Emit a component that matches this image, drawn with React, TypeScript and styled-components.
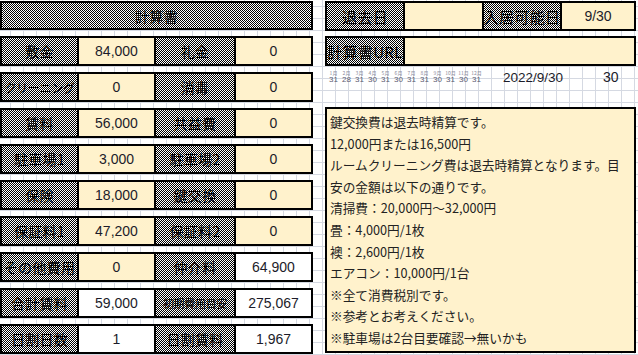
import React from 'react';
import styled, { createGlobalStyle } from 'styled-components';

const GlobalStyle = createGlobalStyle`
  html, body {
    margin: 0;
    padding: 0;
    width: 638px;
    height: 355px;
    overflow: hidden;
    background-color: #fff;
    background-image:
      linear-gradient(to right, #d5d9e2 1px, transparent 1px),
      linear-gradient(to bottom, #d5d9e2 1px, transparent 1px);
    background-size: 13px 100%, 100% 12px;
    background-position: 10px 0, 0 6px;
    font-family: "Noto Sans CJK JP", "Liberation Sans", sans-serif;
    color: #1c1c1c;
  }
`;

type Pair = { label: string; value: string; size?: number; white?: boolean };

const leftRows: Pair[][] = [
  [{ label: '敷金', value: '84,000' }, { label: '礼金', value: '0' }],
  [{ label: 'クリーニング', value: '0', size: 12 }, { label: '消毒', value: '0' }],
  [{ label: '賃料', value: '56,000' }, { label: '共益費', value: '0' }],
  [{ label: '駐車場1', value: '3,000' }, { label: '駐車場2', value: '0' }],
  [{ label: '保険', value: '18,000' }, { label: '鍵交換', value: '0' }],
  [{ label: '保証料1', value: '47,200' }, { label: '保証料2', value: '0' }],
  [{ label: 'その他費用', value: '0' }, { label: '仲介料', value: '64,900', white: true }],
  [{ label: '合計賃料', value: '59,000', white: true }, { label: '初期費用目安', value: '275,067', size: 11, white: true }],
  [{ label: '日割日数', value: '1', white: true }, { label: '日割賃料', value: '1,967', white: true }],
];

const months = [31, 28, 31, 30, 31, 30, 31, 31, 30, 31, 30, 31];

const notes = [
  '鍵交換費は退去時精算です。',
  '12,000円または16,500円',
  'ルームクリーニング費は退去時精算となります。目',
  '安の金額は以下の通りです。',
  '清掃費：20,000円～32,000円',
  '畳：4,000円/1枚',
  '襖：2,600円/1枚',
  'エアコン：10,000円/1台',
  '※全て消費税別です。',
  '※参考とお考えください。',
  '※駐車場は2台目要確認→無いかも',
];

export default function App() {
  return (
    <>
      <GlobalStyle />
      <Sheet>
        <LeftTable>
          <TitleRow>
            <Label>計算書</Label>
          </TitleRow>
          {leftRows.map((row, i) => (
            <Row key={i}>
              {row.map((c) => (
                <React.Fragment key={c.label}>
                  <Label $size={c.size}>{c.label}</Label>
                  <Value $white={c.white}>{c.value}</Value>
                </React.Fragment>
              ))}
            </Row>
          ))}
        </LeftTable>

        <RightPanel>
          <TopRow>
            <Label $size={15}>退去日</Label>
            <Value />
            <Label $size={15}>入居可能日</Label>
            <Value>9/30</Value>
          </TopRow>
          <UrlRow>
            <Label $size={15}>計算書URL</Label>
            <Value />
          </UrlRow>
          <DateStrip>
            <MonthList>
              {months.map((d, i) => (
                <Month key={i}>
                  <MonthName>{i + 1}月</MonthName>
                  <MonthDays>{d}</MonthDays>
                </Month>
              ))}
            </MonthList>
            <DateText>2022/9/30</DateText>
            <DayText>30</DayText>
          </DateStrip>
          <Notes>
            {notes.map((n) => (
              <NoteLine key={n}>{n}</NoteLine>
            ))}
          </Notes>
        </RightPanel>
      </Sheet>
    </>
  );
}

const Sheet = styled.div`
  display: flex;
  gap: 12px;
  padding-top: 1px;
  width: 638px;
  height: 355px;
  box-sizing: border-box;
`;

const LeftTable = styled.div`
  display: flex;
  flex-direction: column;
  gap: 6px;
  width: 313px;
`;

const Row = styled.div`
  display: grid;
  grid-template-columns: 75px 75px 78px 75px;
  gap: 2px;
  height: 30px;
  box-sizing: border-box;
  border: 2px solid #000;
  background: #000;
`;

const TitleRow = styled(Row)`
  grid-template-columns: 1fr;
  height: 29px;
`;

const Label = styled.div<{ $size?: number }>`
  display: flex;
  align-items: center;
  justify-content: center;
  white-space: nowrap;
  overflow: visible;
  background: repeating-conic-gradient(#000 0% 25%, #fff 0% 50%) 0 0 / 2px 2px;
  color: #000;
  font-size: ${(p) => p.$size ?? 14}px;
  letter-spacing: ${(p) => (p.$size && p.$size < 13 ? '-0.3px' : '0.3px')};
`;

const Value = styled.div<{ $white?: boolean }>`
  display: flex;
  align-items: center;
  justify-content: center;
  background: ${(p) => (p.$white ? '#fff' : '#fff2cc')};
  font-family: "Liberation Sans", "Noto Sans CJK JP", sans-serif;
  font-size: 14px;
  color: #1c1c2a;
`;

const RightPanel = styled.div`
  display: flex;
  flex-direction: column;
  width: 311px;
`;

const TopRow = styled(Row)`
  grid-template-columns: 76px 77px 76px 72px;
  height: 30px;
`;

const UrlRow = styled(Row)`
  grid-template-columns: 76px 1fr;
  margin-top: 5px;
`;

const DateStrip = styled.div`
  display: flex;
  align-items: center;
  height: 22px;
  padding-left: 2px;
`;

const MonthList = styled.div`
  display: flex;
  width: 156px;
`;

const Month = styled.div`
  display: flex;
  flex-direction: column;
  align-items: center;
  width: 13px;
  line-height: 1;
`;

const MonthName = styled.span`
  font-size: 5px;
  color: #8a8a9a;
  margin-bottom: 1px;
`;

const MonthDays = styled.span`
  font-family: "Liberation Sans", sans-serif;
  font-size: 8px;
  color: #5a5a70;
`;

const DateText = styled.span`
  margin-left: 20px;
  font-family: "Liberation Sans", sans-serif;
  font-size: 13.5px;
  color: #1c1c2a;
`;

const DayText = styled(DateText)`
  margin-left: 40px;
  font-size: 14px;
`;

const Notes = styled.div`
  margin-top: 19px;
  height: 246px;
  box-sizing: border-box;
  border: 2px solid #000;
  background: #fff2cc;
  padding: 2px 3px;
  overflow: hidden;
`;

const NoteLine = styled.div`
  font-size: 12.7px;
  line-height: 21.6px;
  white-space: nowrap;
  color: #222;
`;
